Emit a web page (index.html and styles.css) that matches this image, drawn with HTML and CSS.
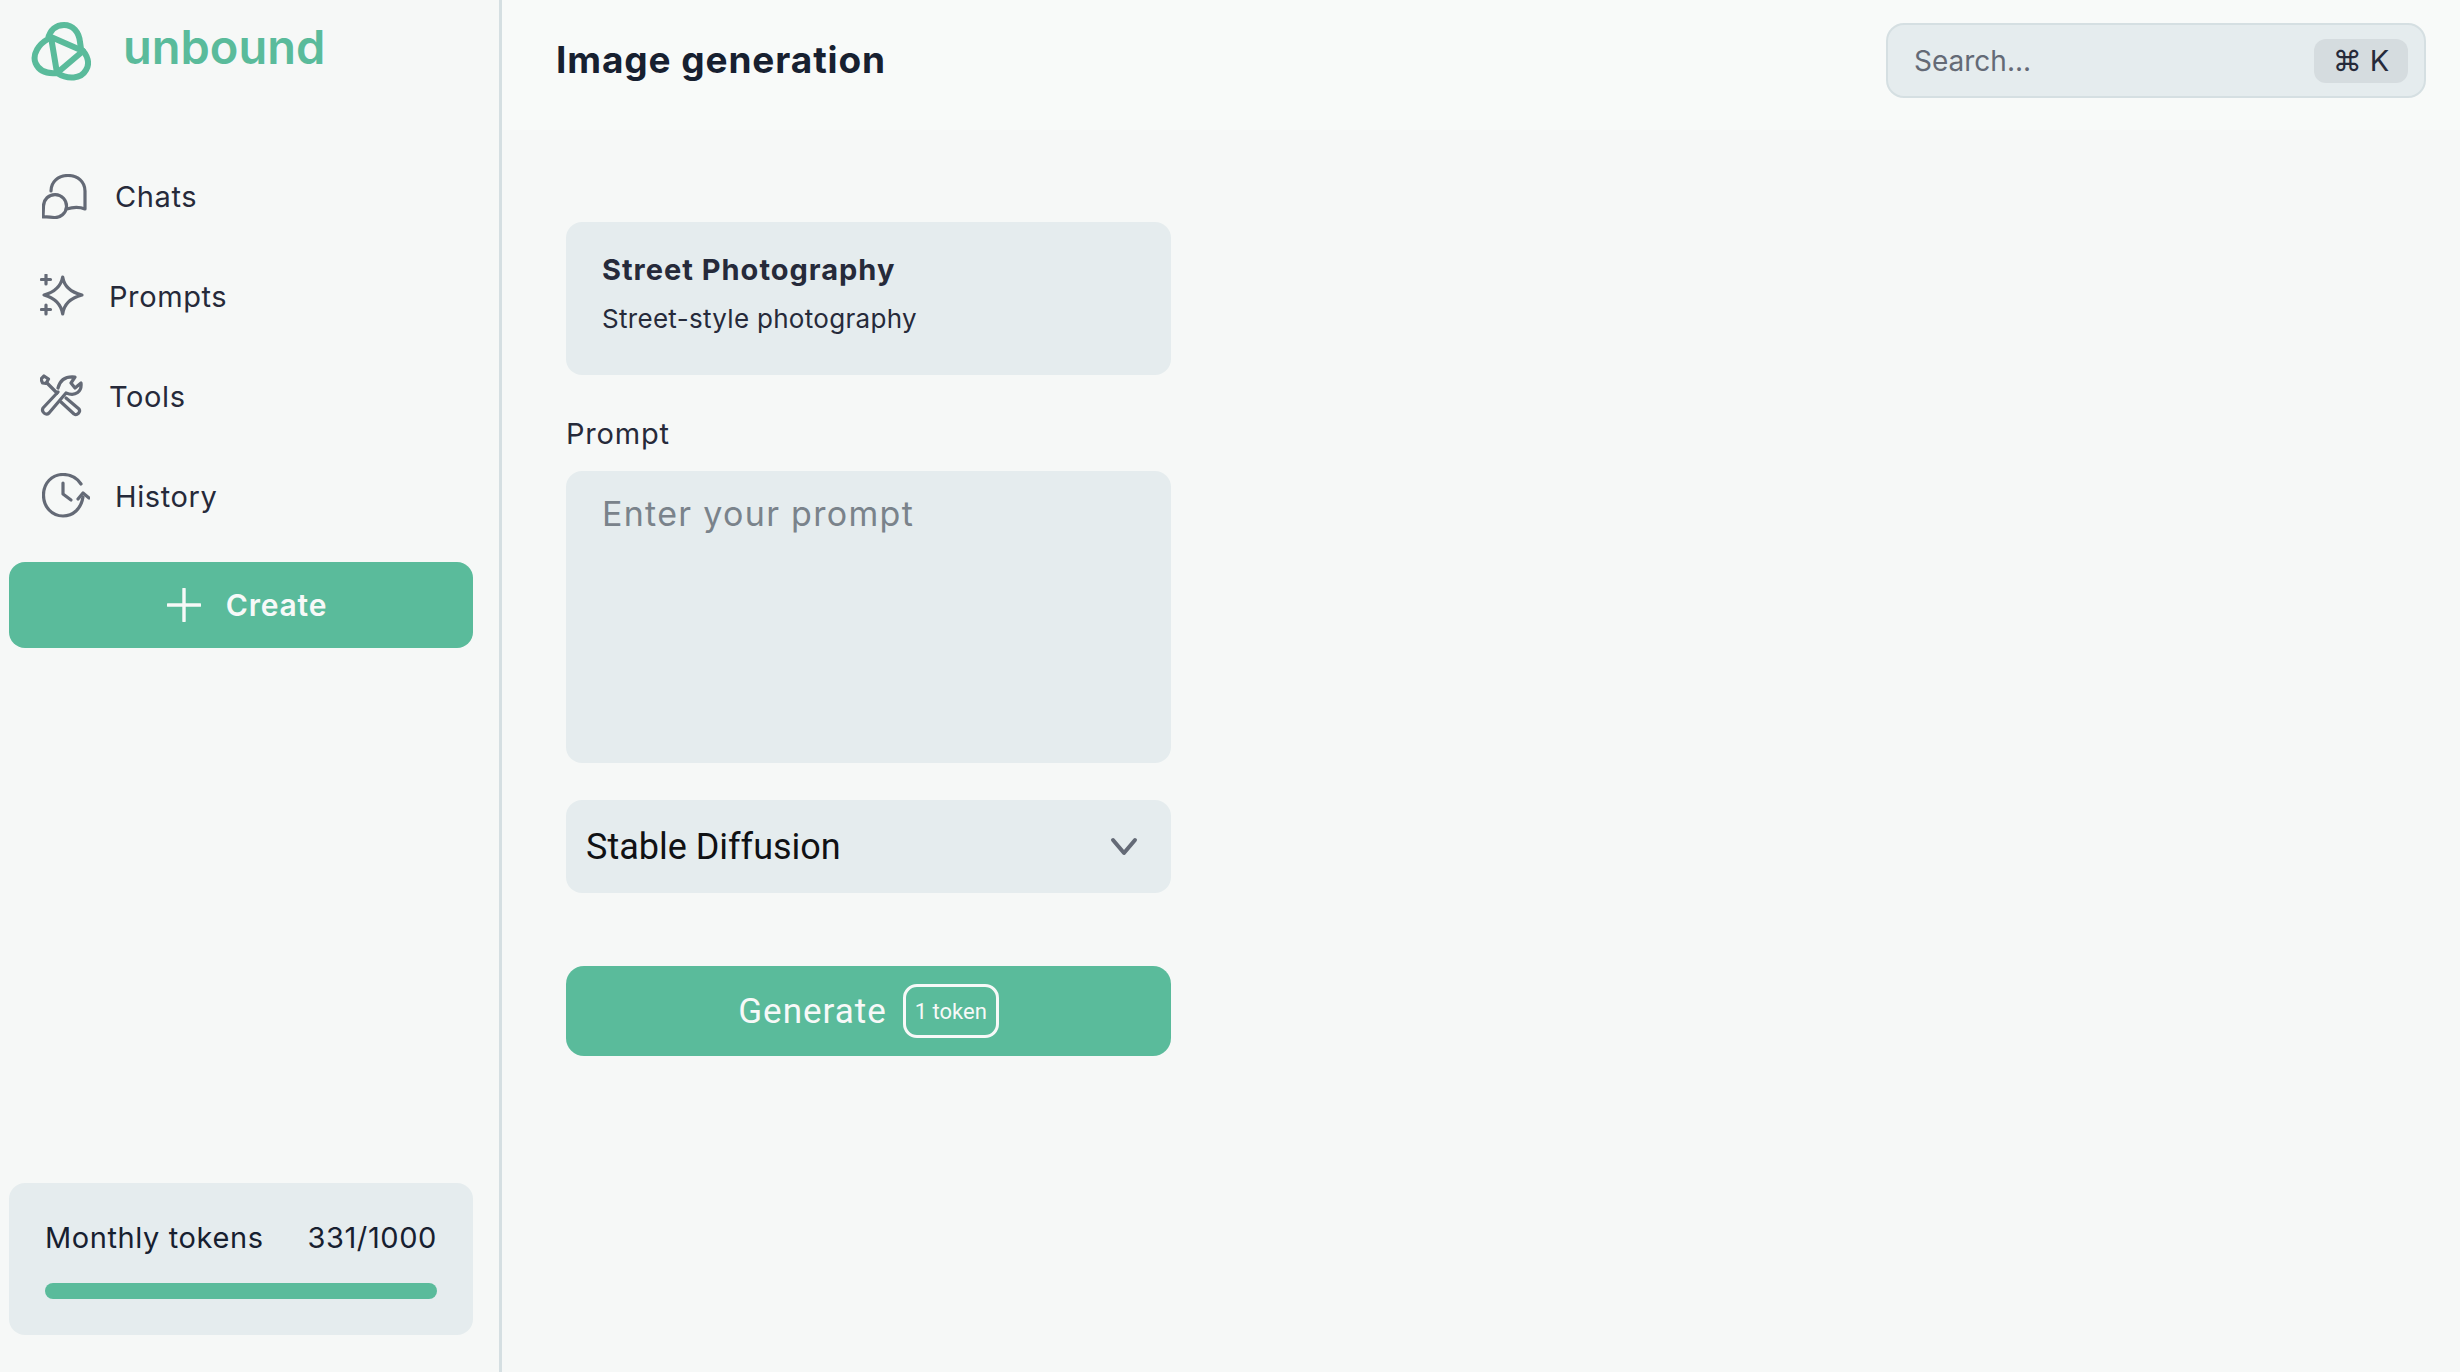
FILE: index.html
```html
<!DOCTYPE html>
<html lang="en">
<head>
    <meta charset="UTF-8">
    <title>Image generation - unbound</title>
    <link rel="stylesheet" href="styles.css">
</head>
<body>
    <div class="app">
        <aside class="sidebar">
            <div class="logo">
                <svg class="logo-mark" viewBox="0 0 60 60" fill="none" stroke="#5abb9b" stroke-width="6" stroke-linejoin="round">
                    <path d="M17 17C19 8 25 3 33 3C42 3 48 10 49 20L50 27C57 33 59 42 55 48C50 57 37 58 26 51C16 52 8 49 4.500 41C1 32 8 22 17 17Z"/>
                    <path d="M20 15L26 51L52 29Z"/>
                </svg>
                <span class="logo-text">unbound</span>
            </div>
            <nav class="nav">
                <a class="nav-item nav-wide">
                    <svg class="nav-icon" viewBox="0 0 45 45" fill="none" stroke="#646a76" stroke-width="3.200" stroke-linecap="round" stroke-linejoin="round">
                        <path d="M9 17C9 8 16 1.500 26 1.500C36 1.500 43 8 43 17V35C38 33 31 33 24.500 35"/>
                        <path d="M1 43L1.500 32A11.500 11.500 0 1 1 12 43.500Q6 42.500 1 43Z"/>
                    </svg>
                    Chats
                </a>
                <a class="nav-item">
                    <svg class="nav-icon" viewBox="0 0 44 44" fill="none" stroke="#646a76" stroke-width="3.200" stroke-linecap="round" stroke-linejoin="round">
                        <path d="M22.700 3C24 12 30 18 42 21C30 24 24 30 22.700 40C21 30 15 24 4 21C15 18 21 12 22.700 3Z"/>
                        <path d="M6 1V10M1.500 5.500H10.500"/>
                        <path d="M6 31V40M1.500 35.500H10.500"/>
                    </svg>
                    Prompts
                </a>
                <a class="nav-item">
                    <svg class="nav-icon" viewBox="0 0 44 44" fill="none" stroke="#646a76" stroke-width="3.200" stroke-linecap="round" stroke-linejoin="round">
                        <path d="M1 5L4 2L8.500 5L6 9.500L2.500 9Z"/>
                        <path d="M7 9L17 19"/>
                        <path d="M26 24L39 35C41 38 37 42 34 40L21 28"/>
                        <path d="M18 14C20 6 25 2 35 3L31 9L35 14L41 9C42 17 36 23 26 19L9 39C6 42 1 38 3 34L18 18"/>
                    </svg>
                    Tools
                </a>
                <a class="nav-item nav-wide icon-history-row">
                    <svg class="nav-icon icon-history" viewBox="0 0 48 46" fill="none" stroke="#646a76" stroke-width="3.200" stroke-linecap="round" stroke-linejoin="round">
                        <path d="M39 11C35 5 28 1.500 21 1.500C10 1.500 1.500 10 1.500 22C1.500 34 10 43 21 43C31 43 39 36 41 24"/>
                        <path d="M36 26L41 20L47 25"/>
                        <path d="M21 10V21L29 27"/>
                    </svg>
                    History
                </a>
            </nav>
            <button class="create-btn">
                <svg class="plus" viewBox="0 0 34 34" fill="none" stroke="#f7f9f8" stroke-width="3.400" stroke-linecap="round"><path d="M17 1V33M1 17H33"/></svg>
                Create
            </button>
            <div class="tokens">
                <div class="tokens-row">
                    <span>Monthly tokens</span>
                    <span>331/1000</span>
                </div>
                <div class="tokens-bar"></div>
            </div>
        </aside>
        <div class="content">
            <header class="topbar">
                <h1 class="page-title">Image generation</h1>
                <div class="search">
                    <span class="search-text">Search...</span>
                    <span class="kbd">⌘ K</span>
                </div>
            </header>
            <main class="form">
                <div class="style-card">
                    <div class="style-name">Street Photography</div>
                    <div class="style-desc">Street-style photography</div>
                </div>
                <label class="prompt-label">Prompt</label>
                <div class="prompt-box">Enter your prompt</div>
                <div class="select">
                    <span>Stable Diffusion</span>
                    <svg class="chevron" viewBox="0 0 28 20" fill="none" stroke="#646a76" stroke-width="4" stroke-linecap="round" stroke-linejoin="round"><path d="M3 3L14 16L25 3"/></svg>
                </div>
                <button class="generate-btn">
                    Generate
                    <span class="token-pill">1 token</span>
                </button>
            </main>
        </div>
    </div>
</body>
</html>
```

FILE: styles.css
```css
* { margin: 0; padding: 0; box-sizing: border-box; }
html, body { height: 100%; }
body {
    font-family: Inter, "Liberation Sans", sans-serif;
    background: #f6f8f7;
    color: #262a3a;
}
.app {
    display: flex;
    height: 1372px;
    overflow: hidden;
}

/* sidebar */
.sidebar {
    width: 502px;
    flex-shrink: 0;
    border-right: 3px solid #d5dfe2;
    padding: 0 26px 37px 9px;
    display: flex;
    flex-direction: column;
}
.logo {
    display: flex;
    align-items: center;
    height: 104px;
    padding-left: 22px;
    gap: 32px;
}
.logo-mark {
    width: 60px;
    height: 60px;
    flex-shrink: 0;
}
.logo-text {
    font-size: 47px;
    font-weight: 600;
    color: #5abb9b;
    position: relative;
    top: -6px;
}
.nav {
    display: flex;
    flex-direction: column;
    margin-top: 42px;
}
.nav-item {
    display: flex;
    align-items: center;
    gap: 25px;
    height: 100px;
    padding-left: 31px;
    font-size: 29px;
    letter-spacing: 0.6px;
    color: #262a3a;
}
.nav-icon { width: 44px; height: 44px; flex-shrink: 0; }
.nav-wide { padding-left: 33px; gap: 28px; }
.nav-wide .nav-icon { width: 45px; height: 45px; }
.nav-wide .icon-history { width: 48px; height: 46px; }
.icon-history-row { gap: 25px; }
.create-btn {
    height: 86px;
    margin-top: 16px;
    padding-left: 12px;
    border: none;
    border-radius: 16px;
    background: #5abb9b;
    color: #f7f9f8;
    font-family: inherit;
    font-size: 30px;
    font-weight: 600;
    letter-spacing: 0.8px;
    display: flex;
    align-items: center;
    justify-content: center;
    gap: 25px;
}
.plus { width: 34px; height: 34px; }
.tokens {
    margin-top: auto;
    height: 152px;
    background: #e5ecee;
    border-radius: 16px;
    padding: 36px 36px 0;
}
.tokens-row {
    display: flex;
    justify-content: space-between;
    font-size: 29px;
    letter-spacing: 0.6px;
    line-height: 38px;
    color: #172030;
}
.tokens-bar {
    height: 16px;
    margin-top: 26px;
    background: #5abb9b;
    border-radius: 8px;
}

/* main area */
.content {
    flex: 1;
    display: flex;
    flex-direction: column;
}
.topbar {
    height: 130px;
    background: #f8faf9;
    display: flex;
    align-items: flex-start;
    justify-content: space-between;
    padding: 23px 34px 0 54px;
}
.page-title {
    font-size: 37px;
    font-weight: 700;
    letter-spacing: 0.9px;
    line-height: 74px;
    color: #172030;
}
.search {
    width: 540px;
    height: 75px;
    background: #e5ecee;
    border: 2px solid #d5dfe2;
    border-radius: 18px;
    display: flex;
    align-items: center;
    justify-content: space-between;
    padding: 0 16px 0 26px;
}
.search-text {
    font-size: 28px;
    color: #646a76;
}
.kbd {
    width: 94px;
    height: 44px;
    background: #d5dcdf;
    border-radius: 12px;
    display: flex;
    align-items: center;
    justify-content: center;
    font-size: 29px;
    color: #262a3a;
}
.form {
    width: 605px;
    margin: 92px 0 0 64px;
    display: flex;
    flex-direction: column;
}
.style-card {
    height: 153px;
    background: #e5ecee;
    border-radius: 16px;
    padding: 30px 36px 0;
}
.style-name {
    font-size: 29px;
    font-weight: 700;
    letter-spacing: 1px;
    line-height: 36px;
}
.style-desc {
    font-size: 26px;
    letter-spacing: 0.3px;
    line-height: 34px;
    margin-top: 14px;
}
.prompt-label {
    font-size: 29px;
    letter-spacing: 0.8px;
    line-height: 38px;
    margin-top: 40px;
}
.prompt-box {
    height: 292px;
    margin-top: 18px;
    background: #e5ecee;
    border-radius: 16px;
    padding: 21px 36px;
    font-size: 34px;
    letter-spacing: 1.3px;
    line-height: 44px;
    color: #7a838b;
}
.select {
    height: 93px;
    margin-top: 37px;
    background: #e5ecee;
    border-radius: 16px;
    display: flex;
    align-items: center;
    justify-content: space-between;
    padding: 0 33px 0 20px;
    font-family: Roboto, sans-serif;
    font-size: 36px;
    color: #101114;
}
.chevron { width: 28px; height: 20px; }
.generate-btn {
    height: 90px;
    margin-top: 73px;
    border: none;
    border-radius: 18px;
    background: #5abb9b;
    color: #f7f9f8;
    font-family: Roboto, sans-serif;
    font-size: 35px;
    letter-spacing: 1px;
    display: flex;
    align-items: center;
    justify-content: center;
    gap: 16px;
}
.token-pill {
    width: 96px;
    height: 54px;
    border: 3px solid #f7f9f8;
    border-radius: 14px;
    font-size: 22px;
    letter-spacing: 0;
    display: flex;
    align-items: center;
    justify-content: center;
}
```
